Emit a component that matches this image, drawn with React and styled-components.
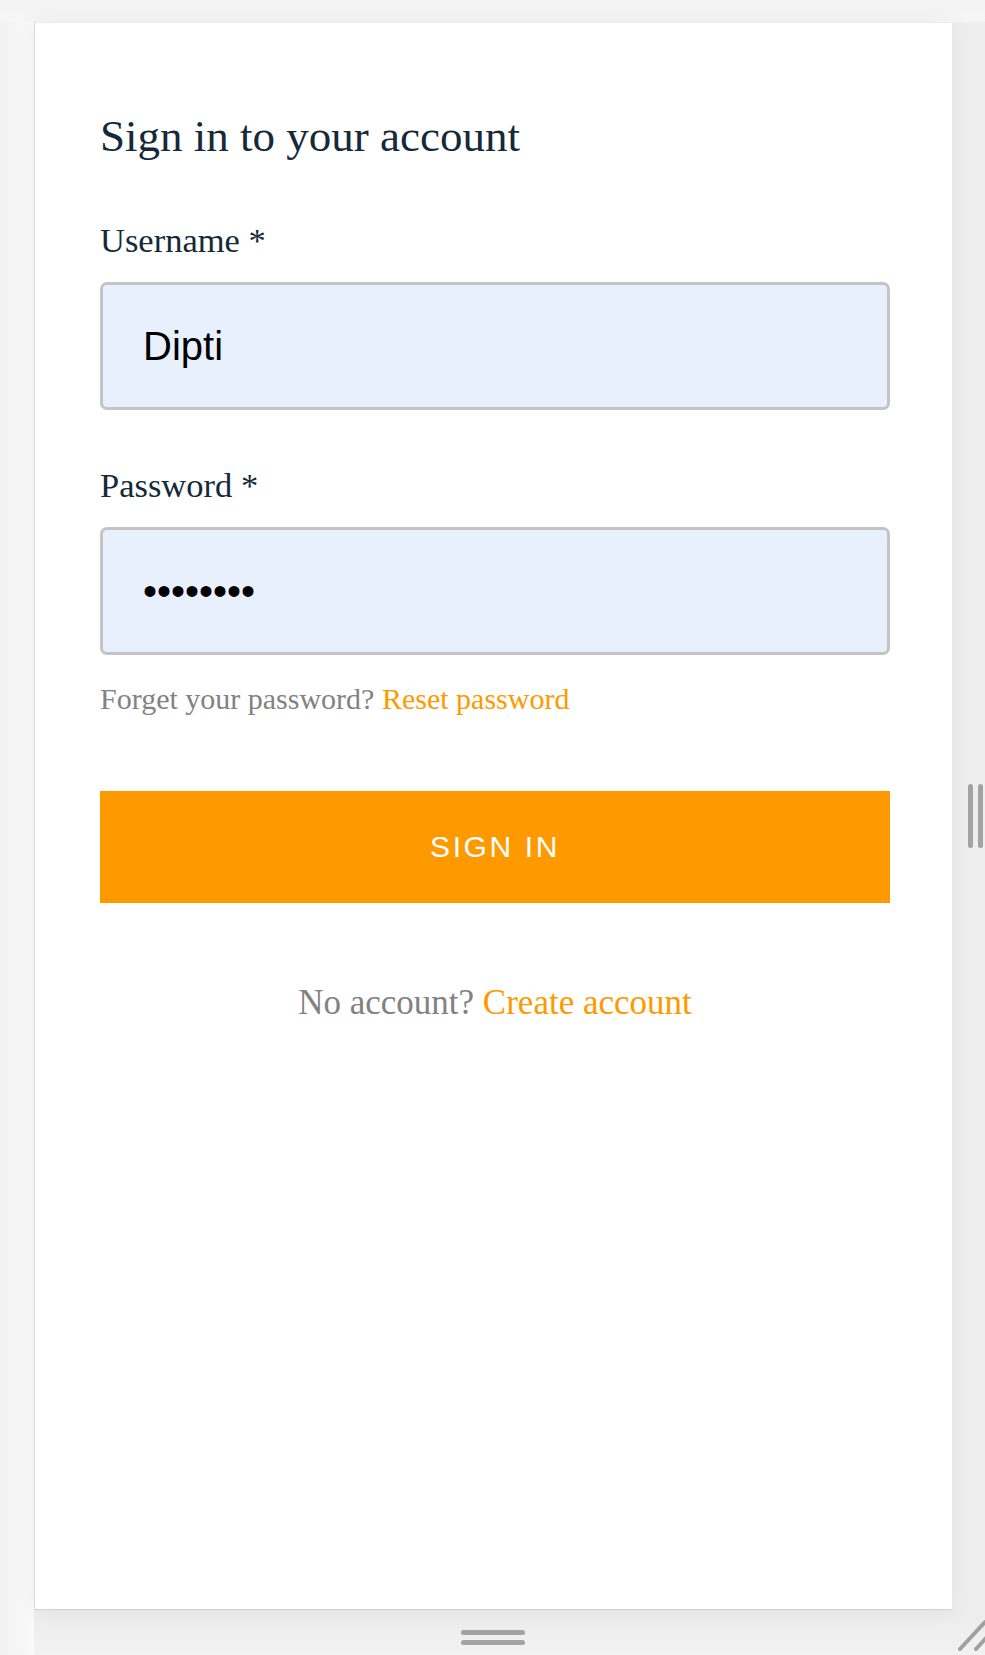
import React from "react";
import styled, { createGlobalStyle } from "styled-components";

const Global = createGlobalStyle`
  html, body { margin: 0; padding: 0; background: #f3f3f3; }
  * { box-sizing: border-box; }
`;

const Page = styled.div`
  display: grid;
  grid-template-columns: 34px 918px 1fr;
  grid-template-rows: 22px 1588px 1fr;
  width: 985px;
  height: 1655px;
  overflow: hidden;
  background: linear-gradient(90deg, #f2f2f2 0px, #f9f9f9 34px);
`;

const TopBar = styled.div`
  grid-column: 1 / 4;
  grid-row: 1;
  background: linear-gradient(180deg, #f3f3f3, #f6f6f6);
`;

const Panel = styled.main`
  grid-column: 2;
  grid-row: 2;
  background: #ffffff;
  border-left: 1px solid #d9d9d9;
  border-top: 1px solid #ececec;
  border-bottom: 1px solid #d2d2d2;
  padding: 87px 62px 0 65px;
  box-shadow: 0 0 24px rgba(0, 0, 0, 0.05);
  position: relative;
  z-index: 1;
`;

const Heading = styled.h1`
  margin: 0;
  font-family: "Liberation Serif", "Times New Roman", serif;
  font-weight: 400;
  font-size: 45px;
  line-height: 52px;
  color: #152939;
`;

const Field = styled.div`
  display: flex;
  flex-direction: column;
  margin-top: ${(p) => p.$top}px;
`;

const Label = styled.label`
  font-family: "Liberation Serif", "Times New Roman", serif;
  font-size: 34.5px;
  line-height: 40px;
  color: #152939;
  margin-bottom: 22px;
`;

const Input = styled.input`
  display: block;
  width: 100%;
  height: 128px;
  padding: 0 40px;
  border: 3px solid #c4c4c4;
  border-radius: 7px;
  background: #e8f0fe;
  color: #000000;
  font-family: "Liberation Sans", Arial, sans-serif;
  font-size: 40px;
  outline: none;
`;

const Hint = styled.div`
  margin-top: 26px;
  font-family: "Liberation Serif", "Times New Roman", serif;
  font-size: 30px;
  line-height: 36px;
  color: #828282;
`;

const Link = styled.a`
  color: #ff9900;
  text-decoration: none;
  cursor: pointer;
`;

const SubmitButton = styled.button`
  display: flex;
  align-items: center;
  justify-content: center;
  width: 100%;
  height: 112px;
  margin-top: 74px;
  border: none;
  background: #ff9900;
  color: #ffffff;
  font-family: "Liberation Sans", Arial, sans-serif;
  font-size: 30px;
  letter-spacing: 2.6px;
  text-transform: uppercase;
  cursor: pointer;
`;

const Footer = styled.div`
  margin-top: 80px;
  text-align: center;
  font-family: "Liberation Serif", "Times New Roman", serif;
  font-size: 35px;
  line-height: 40px;
  color: #828282;
`;

const SideResizer = styled.div`
  grid-column: 3;
  grid-row: 2;
  background: #eeeeee;
  display: flex;
  align-items: center;
  justify-content: flex-end;
  gap: 5px;
  padding-right: 2px;
`;

const VBar = styled.span`
  width: 5px;
  height: 64px;
  border-radius: 3px;
  background: #a3a3a3;
`;

const BottomResizer = styled.div`
  grid-column: 2;
  grid-row: 3;
  background: linear-gradient(180deg, #ececec, #f2f2f2);
  display: flex;
  flex-direction: column;
  align-items: center;
  gap: 5px;
  padding-top: 20px;
`;

const HBar = styled.span`
  width: 64px;
  height: 5px;
  border-radius: 3px;
  background: #a3a3a3;
`;

const Corner = styled.div`
  grid-column: 3;
  grid-row: 3;
  background: linear-gradient(180deg, #ececec, #f2f2f2);
  position: relative;
`;

const CornerIcon = styled.svg`
  position: absolute;
  left: 0;
  top: 0;
`;

export default function App() {
  return (
    <>
      <Global />
      <Page>
        <TopBar />
        <Panel>
          <Heading>Sign in to your account</Heading>
          <Field $top={58}>
            <Label>Username *</Label>
            <Input defaultValue="Dipti" readOnly />
          </Field>
          <Field $top={55}>
            <Label>Password *</Label>
            <Input type="password" defaultValue="12345678" readOnly />
          </Field>
          <Hint>
            Forget your password? <Link>Reset password</Link>
          </Hint>
          <SubmitButton>Sign in</SubmitButton>
          <Footer>
            No account? <Link>Create account</Link>
          </Footer>
        </Panel>
        <SideResizer>
          <VBar />
          <VBar />
        </SideResizer>
        <BottomResizer>
          <HBar />
          <HBar />
        </BottomResizer>
        <Corner>
          <CornerIcon width="33" height="45" viewBox="0 0 33 45">
            <line x1="8" y1="39" x2="33" y2="12" stroke="#a0a0a0" strokeWidth="4" strokeLinecap="round" />
            <line x1="24" y1="39" x2="34" y2="28" stroke="#a0a0a0" strokeWidth="4" strokeLinecap="round" />
          </CornerIcon>
        </Corner>
      </Page>
    </>
  );
}
